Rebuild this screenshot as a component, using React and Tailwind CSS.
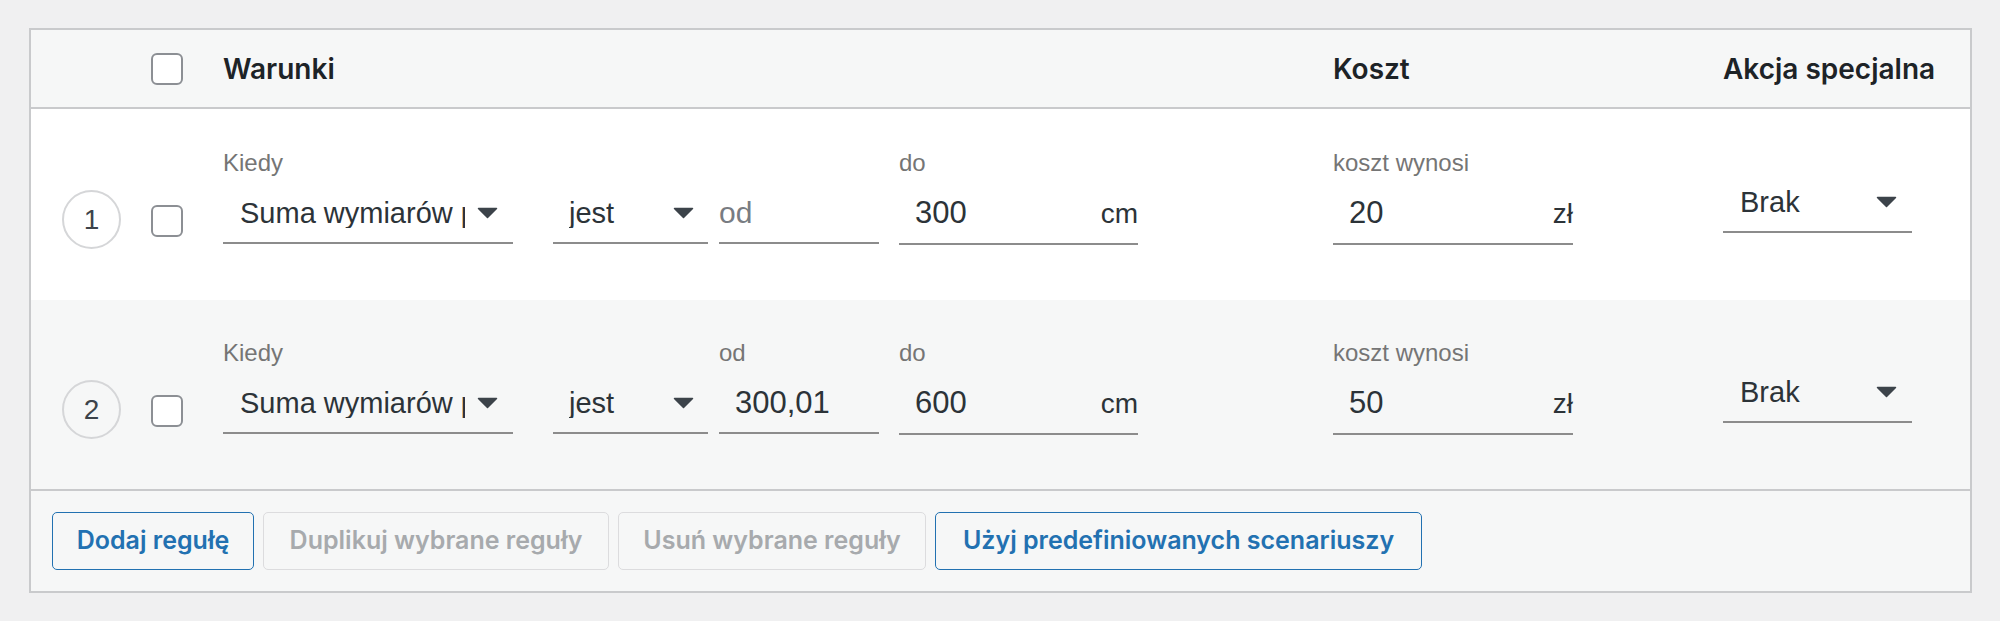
import React from 'react';

const Arrow = () => (
  <svg width="21" height="12" viewBox="0 0 21 12" className="shrink-0">
    <path d="M1.5 1.5h18l-9 9z" fill="#3c434a" stroke="#3c434a" strokeWidth="1.5" strokeLinejoin="round" />
  </svg>
);

const Checkbox = () => (
  <div className="w-[32px] h-[32px] rounded-[6px] border-2 border-[#8c8f94] bg-white" />
);

const Label = ({ children }) => (
  <div className="h-[25px] text-[24px] leading-[25px] text-[#757575] whitespace-nowrap">{children}</div>
);

const SelectField = ({ label, value, width, textWidth, pl, pr }) => (
  <div className={width}>
    <Label>{label}</Label>
    <div className={`mt-[23px] flex items-center pb-[14px] border-b-2 border-[#8c8c8c] ${pl} ${pr}`}>
      <span className={`${textWidth} overflow-hidden whitespace-nowrap text-[29px] leading-[30px] text-[#2c3338]`}>{value}</span>
      <span className="ml-auto"><Arrow /></span>
    </div>
  </div>
);

const InputField = ({ label, value, placeholder, suffix, width }) => (
  <div className={width}>
    <Label>{label}</Label>
    <div className={`mt-[23px] flex items-baseline pb-[14px] border-b-2 border-[#8c8c8c] ${value ? 'pl-[16px]' : ''}`}>
      {value ? (
        <span className="text-[31px] leading-[30px] text-[#2c3338]">{value}</span>
      ) : (
        <span className="text-[30px] leading-[30px] text-[#787c82]">{placeholder}</span>
      )}
      {suffix && <span className="ml-auto text-[28px] leading-[30px] text-[#2c3338]">{suffix}</span>}
    </div>
  </div>
);

const Row = ({ num, from, to, cost, striped }) => (
  <div className={`flex items-start ${striped ? 'bg-[#f6f7f7] h-[189px] pt-[40px]' : 'bg-white h-[191px] pt-[41px]'}`}>
    <div className="w-[120px] shrink-0 pl-[31px] pt-[40px]">
      <div className="w-[59px] h-[59px] rounded-full border-2 border-[#d5d6d8] flex items-center justify-center text-[28px] text-[#3c434a]">
        {num}
      </div>
    </div>
    <div className="w-[72px] shrink-0 pt-[55px]">
      <Checkbox />
    </div>
    <div className="w-[1110px] shrink-0 flex items-start">
      <SelectField label="Kiedy" value="Suma wymiarów paczki" width="w-[290px]" textWidth="w-[225px]" pl="pl-[17px]" pr="pr-[15px]" />
      <div className="ml-[40px]">
        <SelectField label="" value="jest" width="w-[155px]" textWidth="w-[80px]" pl="pl-[16px]" pr="pr-[14px]" />
      </div>
      <div className="ml-[11px]">
        {from ? (
          <InputField label="od" value={from} width="w-[160px]" />
        ) : (
          <InputField label="" placeholder="od" width="w-[160px]" />
        )}
      </div>
      <div className="ml-[20px]">
        <InputField label="do" value={to} suffix="cm" width="w-[239px]" />
      </div>
    </div>
    <div className="w-[390px] shrink-0">
      <InputField label="koszt wynosi" value={cost} suffix="zł" width="w-[240px]" />
    </div>
    <div className="pt-[37px]">
      <div className="w-[189px] flex items-center pl-[17px] pr-[15px] pb-[14px] border-b-2 border-[#8c8c8c]">
        <span className="text-[29px] leading-[30px] text-[#2c3338]">Brak</span>
        <span className="ml-auto"><Arrow /></span>
      </div>
    </div>
  </div>
);

const App = () => {
  return (
    <div className="min-h-screen bg-[#f0f0f1] pl-[29px] pt-[28px] font-['Liberation_Sans',Arial,sans-serif]">
      <div className="w-[1943px] border-2 border-[#c9cacc] bg-white">
        <div className="h-[79px] flex items-center bg-[#f6f7f7] border-b-2 border-[#c9cacc] font-['Inter',sans-serif] text-[28px] font-semibold text-[#1d2327]">
          <div className="w-[120px] shrink-0" />
          <div className="w-[72px] shrink-0">
            <Checkbox />
          </div>
          <div className="w-[1110px] shrink-0">Warunki</div>
          <div className="w-[390px] shrink-0">Koszt</div>
          <div>Akcja specjalna</div>
        </div>

        <Row num="1" to="300" cost="20" />
        <Row num="2" from="300,01" to="600" cost="50" striped />

        <div className="flex gap-[9px] bg-[#f6f7f7] border-t-2 border-[#c9cacc] pl-[21px] pt-[21px] pb-[21px] font-['Inter',sans-serif] text-[25px] font-semibold">
          <button className="w-[202px] h-[58px] rounded-[5px] border-[1.5px] border-[#2271b1] bg-[#f6f7f7] text-[#2271b1]">
            Dodaj regułę
          </button>
          <button disabled className="w-[346px] h-[58px] rounded-[5px] border-[1.5px] border-[#dcdcde] bg-[#f6f7f7] text-[#a7aaad]">
            Duplikuj wybrane reguły
          </button>
          <button disabled className="w-[308px] h-[58px] rounded-[5px] border-[1.5px] border-[#dcdcde] bg-[#f6f7f7] text-[#a7aaad]">
            Usuń wybrane reguły
          </button>
          <button className="w-[487px] h-[58px] rounded-[5px] border-[1.5px] border-[#2271b1] bg-[#f6f7f7] text-[#2271b1]">
            Użyj predefiniowanych scenariuszy
          </button>
        </div>
      </div>
    </div>
  );
};

export default App;
